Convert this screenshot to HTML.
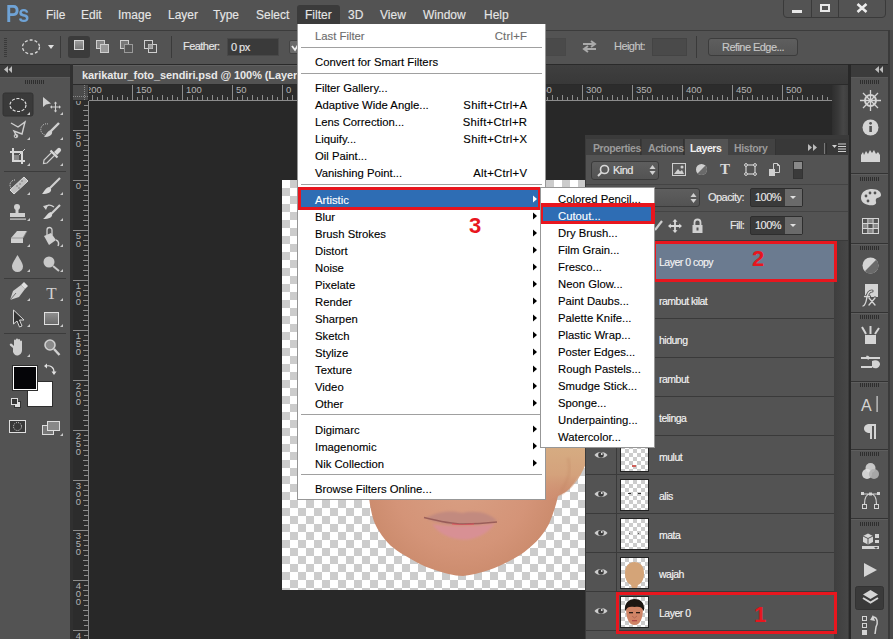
<!DOCTYPE html><html><head><meta charset="utf-8"><style>

*{margin:0;padding:0;box-sizing:border-box}
html,body{width:893px;height:639px;overflow:hidden;background:#282828;font-family:"Liberation Sans",sans-serif}
.ab{position:absolute}
.t{position:absolute;white-space:nowrap;line-height:1}

</style></head><body>
<div class="ab" style="left:0px;top:0px;width:893px;height:30px;background:#535353"></div>
<div class="t" style="left:6px;top:3px;font-size:22px;color:#6fa3d6;font-weight:bold;letter-spacing:-1px;transform:scale(0.9,1.08);transform-origin:0 0">Ps</div>
<div class="ab" style="left:297px;top:5px;width:43px;height:19px;background:#3b3b3b;border-radius:3px 3px 0 0"></div>
<div class="t" style="left:46px;top:9px;font-size:12px;color:#e6e6e6;-webkit-text-stroke-width:0.12px">File</div>
<div class="t" style="left:81px;top:9px;font-size:12px;color:#e6e6e6;-webkit-text-stroke-width:0.12px">Edit</div>
<div class="t" style="left:118px;top:9px;font-size:12px;color:#e6e6e6;-webkit-text-stroke-width:0.12px">Image</div>
<div class="t" style="left:168px;top:9px;font-size:12px;color:#e6e6e6;-webkit-text-stroke-width:0.12px">Layer</div>
<div class="t" style="left:213px;top:9px;font-size:12px;color:#e6e6e6;-webkit-text-stroke-width:0.12px">Type</div>
<div class="t" style="left:256px;top:9px;font-size:12px;color:#e6e6e6;-webkit-text-stroke-width:0.12px">Select</div>
<div class="t" style="left:305px;top:9px;font-size:12px;color:#e6e6e6;-webkit-text-stroke-width:0.12px">Filter</div>
<div class="t" style="left:348px;top:9px;font-size:12px;color:#e6e6e6;-webkit-text-stroke-width:0.12px">3D</div>
<div class="t" style="left:380px;top:9px;font-size:12px;color:#e6e6e6;-webkit-text-stroke-width:0.12px">View</div>
<div class="t" style="left:423px;top:9px;font-size:12px;color:#e6e6e6;-webkit-text-stroke-width:0.12px">Window</div>
<div class="t" style="left:484px;top:9px;font-size:12px;color:#e6e6e6;-webkit-text-stroke-width:0.12px">Help</div>
<div class="ab" style="left:783px;top:-3px;width:103px;height:21px;background:#535353;border:1px solid #3a3a3a;border-radius:4px;"></div>
<div class="ab" style="left:811px;top:0px;width:1px;height:17px;background:#3a3a3a"></div>
<div class="ab" style="left:838px;top:0px;width:1px;height:17px;background:#3a3a3a"></div>
<div class="ab" style="left:792px;top:10px;width:10px;height:3px;background:#e8e8e8"></div>
<div class="ab" style="left:820px;top:4px;width:10px;height:8px;border:2px solid #e8e8e8"></div>
<svg class="ab" style="left:856px;top:3px" width="12" height="10"><path d="M1.5 1L10.5 9M10.5 1L1.5 9" stroke="#ececec" stroke-width="2.6"/></svg>
<div class="ab" style="left:0px;top:30px;width:893px;height:1px;background:#3c3c3c"></div>
<div class="ab" style="left:0px;top:31px;width:888px;height:33px;background:#535353"></div>
<div class="ab" style="left:0px;top:64px;width:893px;height:1px;background:#2a2a2a"></div>
<div class="ab" style="left:4px;top:38px;width:3px;height:1px;background:#3a3a3a"></div>
<div class="ab" style="left:4px;top:40px;width:3px;height:1px;background:#3a3a3a"></div>
<div class="ab" style="left:4px;top:42px;width:3px;height:1px;background:#3a3a3a"></div>
<div class="ab" style="left:4px;top:44px;width:3px;height:1px;background:#3a3a3a"></div>
<div class="ab" style="left:4px;top:46px;width:3px;height:1px;background:#3a3a3a"></div>
<div class="ab" style="left:4px;top:48px;width:3px;height:1px;background:#3a3a3a"></div>
<div class="ab" style="left:4px;top:50px;width:3px;height:1px;background:#3a3a3a"></div>
<div class="ab" style="left:4px;top:52px;width:3px;height:1px;background:#3a3a3a"></div>
<div class="ab" style="left:4px;top:54px;width:3px;height:1px;background:#3a3a3a"></div>
<div class="ab" style="left:4px;top:56px;width:3px;height:1px;background:#3a3a3a"></div>
<svg class="ab" style="left:20px;top:37px" width="22" height="20"><ellipse cx="11" cy="10" rx="8.5" ry="7" fill="none" stroke="#dcdcdc" stroke-width="1.3" stroke-dasharray="3 2"/></svg>
<svg class="ab" style="left:48px;top:45px" width="7" height="5"><path d="M0 0H6L3 4Z" fill="#e0e0e0"/></svg>
<div class="ab" style="left:60px;top:36px;width:1px;height:22px;background:#3a3a3a"></div>
<div class="ab" style="left:68px;top:36px;width:22px;height:22px;background:#3b3b3b;border-radius:3px"></div>
<div class="ab" style="left:74px;top:40px;width:10px;height:10px;background:linear-gradient(#9a9a9a,#777);border:1px solid #d8d8d8"></div>
<svg class="ab" style="left:95px;top:39px" width="16" height="16"><rect x="1.5" y="1.5" width="8" height="8" fill="#888" stroke="#cfcfcf"/><rect x="5.5" y="5.5" width="8" height="8" fill="#999" stroke="#cfcfcf"/></svg>
<svg class="ab" style="left:119px;top:39px" width="16" height="16"><rect x="1.5" y="1.5" width="8" height="8" fill="#777" stroke="#cfcfcf"/><rect x="5.5" y="5.5" width="8" height="8" fill="#555" stroke="#9a9a9a"/></svg>
<svg class="ab" style="left:143px;top:39px" width="16" height="16"><rect x="1.5" y="1.5" width="8" height="8" fill="none" stroke="#cfcfcf"/><rect x="5.5" y="5.5" width="8" height="8" fill="none" stroke="#cfcfcf"/><rect x="5.5" y="5.5" width="4" height="4" fill="#999"/></svg>
<div class="ab" style="left:171px;top:36px;width:1px;height:22px;background:#3a3a3a"></div>
<div class="t" style="left:183px;top:41px;font-size:11px;color:#e6e6e6;;letter-spacing:-0.55px;-webkit-text-stroke-width:0.15px">Feather:</div>
<div class="ab" style="left:227px;top:38px;width:52px;height:18px;background:#3a3a3a;border:1px solid #484848"></div>
<div class="t" style="left:231px;top:42px;font-size:11px;color:#e6e6e6;;letter-spacing:-0.55px;-webkit-text-stroke-width:0.15px">0 px</div>
<div class="ab" style="left:289px;top:40px;width:12px;height:14px;background:#6a6a6a;border:1px solid #444;border-radius:2px"></div>
<svg class="ab" style="left:291px;top:44px" width="8" height="8"><path d="M1 2L4 6L7 1" fill="none" stroke="#eee" stroke-width="1.8"/></svg>
<div class="ab" style="left:545px;top:38px;width:21px;height:18px;background:#4a4a4a;border:1px solid #484848"></div>
<svg class="ab" style="left:581px;top:39px" width="17" height="15"><path d="M2 5H13M10 2L14 5L10 8M15 10H4M7 7L3 10L7 13" fill="none" stroke="#aaa" stroke-width="2"/></svg>
<div class="t" style="left:614px;top:41px;font-size:11px;color:#c4c4c4;;letter-spacing:-0.55px;-webkit-text-stroke-width:0.15px">Height:</div>
<div class="ab" style="left:652px;top:38px;width:35px;height:18px;background:#4a4a4a;border:1px solid #444"></div>
<div class="ab" style="left:696px;top:36px;width:1px;height:22px;background:#3a3a3a"></div>
<div class="ab" style="left:708px;top:38px;width:90px;height:18px;background:linear-gradient(#5e5e5e,#555);border:1px solid #3c3c3c;border-radius:3px"></div>
<div class="t" style="left:722px;top:42px;font-size:11px;color:#c8c8c8;;letter-spacing:-0.55px;-webkit-text-stroke-width:0.15px">Refine Edge...</div>
<div class="ab" style="left:888px;top:30px;width:5px;height:609px;background:#3a3a3a"></div>
<div class="ab" style="left:890px;top:30px;width:3px;height:609px;background:#4a4a4a"></div>
<div class="ab" style="left:0px;top:65px;width:70px;height:574px;background:#535353"></div>
<div class="ab" style="left:0px;top:65px;width:70px;height:12px;background:#3b3b3b"></div>
<div class="ab" style="left:0px;top:77px;width:70px;height:1px;background:#5a5a5a"></div>
<svg class="ab" style="left:4px;top:66px" width="9" height="8"><path d="M4 0V7L0 3.5ZM8 0V7L4.5 3.5Z" fill="#bdbdbd"/></svg>
<div class="ab" style="left:25px;top:80px;width:1px;height:4px;background:#2e2e2e"></div>
<div class="ab" style="left:27px;top:80px;width:1px;height:4px;background:#2e2e2e"></div>
<div class="ab" style="left:29px;top:80px;width:1px;height:4px;background:#2e2e2e"></div>
<div class="ab" style="left:31px;top:80px;width:1px;height:4px;background:#2e2e2e"></div>
<div class="ab" style="left:33px;top:80px;width:1px;height:4px;background:#2e2e2e"></div>
<div class="ab" style="left:35px;top:80px;width:1px;height:4px;background:#2e2e2e"></div>
<div class="ab" style="left:37px;top:80px;width:1px;height:4px;background:#2e2e2e"></div>
<div class="ab" style="left:39px;top:80px;width:1px;height:4px;background:#2e2e2e"></div>
<div class="ab" style="left:41px;top:80px;width:1px;height:4px;background:#2e2e2e"></div>
<div class="ab" style="left:43px;top:80px;width:1px;height:4px;background:#2e2e2e"></div>
<svg class="ab" style="left:0;top:0" width="70" height="450"><defs><linearGradient id="gg" x1="0" y1="0" x2="0" y2="1"><stop offset="0" stop-color="#e0e0e0"/><stop offset="1" stop-color="#a8a8a8"/></linearGradient></defs><rect x="3" y="93" width="30" height="23" rx="2" fill="#3a3a3a" stroke="#333"/><rect x="4" y="171" width="62" height="1" fill="#3c3c3c"/><rect x="4" y="278" width="62" height="1" fill="#3c3c3c"/><rect x="4" y="333" width="62" height="1" fill="#3c3c3c"/><path d="M30 112V115H27Z" fill="#c8c8c8"/><path d="M63 112V115H60Z" fill="#c8c8c8"/><path d="M30 137V140H27Z" fill="#c8c8c8"/><path d="M63 137V140H60Z" fill="#c8c8c8"/><path d="M30 163V166H27Z" fill="#c8c8c8"/><path d="M63 163V166H60Z" fill="#c8c8c8"/><path d="M30 192V195H27Z" fill="#c8c8c8"/><path d="M63 192V195H60Z" fill="#c8c8c8"/><path d="M30 218V221H27Z" fill="#c8c8c8"/><path d="M63 218V221H60Z" fill="#c8c8c8"/><path d="M30 244V247H27Z" fill="#c8c8c8"/><path d="M63 244V247H60Z" fill="#c8c8c8"/><path d="M30 269V272H27Z" fill="#c8c8c8"/><path d="M63 269V272H60Z" fill="#c8c8c8"/><path d="M30 298V301H27Z" fill="#c8c8c8"/><path d="M63 298V301H60Z" fill="#c8c8c8"/><path d="M30 324V327H27Z" fill="#c8c8c8"/><path d="M63 324V327H60Z" fill="#c8c8c8"/><path d="M30 354V357H27Z" fill="#c8c8c8"/><path d="M63 433V436H60Z" fill="#c8c8c8"/><ellipse cx="18" cy="105" rx="8" ry="6.5" fill="none" stroke="#e0e0e0" stroke-width="1.2" stroke-dasharray="3 1.6"/><path d="M43 97V107L46 104.5L51 103.5Z" fill="#d0d0d0"/><path d="M55.5 103V111M51.5 107H59.5" stroke="#d0d0d0" stroke-width="1.1"/><path d="M55.5 101.5L53.8 103.5H57.2ZM55.5 112.5L53.8 110.5H57.2ZM50 107L52 105.3V108.7ZM61 107L59 105.3V108.7Z" fill="#d0d0d0"/><path d="M11 123L18 127L25 122L22 134L14 131L17 137" fill="none" stroke="#d0d0d0" stroke-width="1.4"/><circle cx="16" cy="136" r="1.8" fill="none" stroke="#d0d0d0"/><path d="M48 124A5 5 0 1 0 45 135" fill="none" stroke="#d0d0d0" stroke-dasharray="1 1"/><path d="M59 123L51 131" stroke="#d0d0d0" stroke-width="2.4"/><path d="M51 130C47 131 46 135 44 137C49 137 53 135 52 131Z" fill="#d0d0d0"/><path d="M13 148V161H25M10 152H22V164" fill="none" stroke="#d8d8d8" stroke-width="2"/><path d="M14 160L25 149" stroke="#d0d0d0" stroke-width="1"/><rect x="14" y="155" width="5" height="5" fill="#888"/><path d="M43.5 163.5L44 160L52 152L55 155L47 163Z" fill="none" stroke="#d0d0d0" stroke-width="1.2"/><path d="M50.5 150.5L57.5 157.5" stroke="#d8d8d8" stroke-width="2.2"/><path d="M54 152L57.5 148.5A2 2 0 0 1 60.5 151.5L57 155Z" fill="#d8d8d8"/><path d="M10 190L24 177L28 181L14 194Z" fill="#c0c0c0" stroke="#dcdcdc"/><path d="M15 180A5 5 0 0 0 12 189" fill="none" stroke="#e0e0e0" stroke-dasharray="1 1"/><circle cx="17" cy="186" r="0.8" fill="#777"/><circle cx="20" cy="184" r="0.8" fill="#777"/><circle cx="22" cy="181" r="0.8" fill="#777"/><circle cx="19" cy="188" r="0.8" fill="#777"/><path d="M60 178L49 189" stroke="#d0d0d0" stroke-width="2.2"/><path d="M49 187C45 188 44 192 42 194C48 194 52 192 51 189Z" fill="#d8d8d8"/><circle cx="17" cy="207" r="3" fill="#d0d0d0"/><rect x="15.5" y="209" width="3" height="4" fill="#d0d0d0"/><rect x="10" y="213" width="15" height="4" fill="#d0d0d0"/><rect x="10" y="218.5" width="16" height="1.2" fill="#d0d0d0"/><path d="M60 205L51 214" stroke="#d0d0d0" stroke-width="2.2"/><path d="M51 212C47 213 46 217 43 219C49 219 53 217 52 214Z" fill="#d8d8d8"/><path d="M54 207C50 204 46 205 45 208" fill="none" stroke="#d0d0d0" stroke-width="1.3"/><path d="M43 206L46 210L48 205Z" fill="#d0d0d0"/><path d="M11 238L17 231H27L23 238V243H11Z" fill="#d0d0d0"/><path d="M11 238H23L27 231" fill="none" stroke="#8a8a8a" stroke-width="0.8"/><path d="M44 236L51 233L56 240L49 245Z" fill="#d0d0d0"/><path d="M47 235V230A2.5 2.5 0 0 1 52 230V235" fill="none" stroke="#d0d0d0" stroke-width="1.3"/><path d="M56 240C59 241 59 244 58 246" stroke="#d0d0d0" stroke-width="1.5" fill="none"/><path d="M17.5 255C14 261 12 264 12 266.5A5.5 5.5 0 0 0 23 266.5C23 264 21 261 17.5 255Z" fill="#c8c8c8"/><circle cx="49" cy="262" r="5.5" fill="#c8c8c8"/><path d="M53 266L59 271" stroke="#c8c8c8" stroke-width="2"/><path d="M10 300L13 291L21 285L25 289L19 297Z" fill="#d0d0d0"/><path d="M21 285L24 282L28 286L25 289Z" fill="#e0e0e0"/><path d="M10 300L16 293" stroke="#555" stroke-width="0.8"/><text x="51.5" y="298.5" font-family="Liberation Serif" font-size="17" fill="#d0d0d0" text-anchor="middle">T</text><path d="M13.5 310V324L17 321L19.5 327L22 326L19.5 320H24Z" fill="#333" stroke="#d8d8d8" stroke-width="1"/><rect x="44.5" y="312.5" width="14" height="12" fill="url(#rg)" stroke="#e0e0e0"/><defs><linearGradient id="rg" x1="0" y1="0" x2="0" y2="1"><stop offset="0" stop-color="#909090"/><stop offset="1" stop-color="#6a6a6a"/></linearGradient></defs><path d="M13 348L10 345.5A1 1 0 0 1 12 344L14 346V340.5A1 1 0 0 1 16 340.5V344V339.5A1 1 0 0 1 18 339.5V344V340A1 1 0 0 1 20 340V345V341.5A1 1 0 0 1 22 341.5V350C22 353 20 355.5 17 355.5C15 355.5 14 354 13 352Z" fill="#d0d0d0"/><circle cx="50" cy="345" r="5" fill="#8a8a8a" stroke="#d0d0d0" stroke-width="1.6"/><path d="M54 349L59.5 355" stroke="#d0d0d0" stroke-width="2.4"/><path d="M46 366C50 365 54 367 54 372" fill="none" stroke="#e0e0e0" stroke-width="1.2"/><path d="M44 366L47 363.5V368.5ZM54 375L51.5 371.5H56.5Z" fill="#e0e0e0"/><rect x="27" y="381" width="26" height="26" fill="#2e2e2e"/><rect x="28" y="382" width="24" height="24" fill="#fff"/><rect x="12" y="365" width="26" height="26" fill="#2e2e2e"/><rect x="13" y="366" width="24" height="24" fill="#fff"/><rect x="14" y="367" width="22" height="22" fill="#050508"/><rect x="14.5" y="401.5" width="6" height="6" fill="#ddd" stroke="#333"/><rect x="11.5" y="398.5" width="6" height="6" fill="#333" stroke="#ddd"/><rect x="9.5" y="420.5" width="16" height="12" fill="#3a3a3a" stroke="#e0e0e0"/><circle cx="17.5" cy="426.5" r="4" fill="none" stroke="#e0e0e0" stroke-dasharray="1 1.1"/><rect x="42.5" y="425.5" width="11" height="9" fill="#777" stroke="#ddd"/><rect x="47.5" y="421.5" width="12" height="9" fill="#888" stroke="#ddd"/></svg>
<div class="ab" style="left:70px;top:64px;width:3px;height:575px;background:#303030"></div>
<div class="ab" style="left:73px;top:65px;width:775px;height:20px;background:linear-gradient(#3f3f3f,#383838)"></div>
<div class="ab" style="left:73px;top:65px;width:470px;height:19px;background:#535353;border-top:1px solid #606060"></div>
<div class="t" style="left:82px;top:70px;font-size:11px;color:#e8e8e8;font-weight:bold;letter-spacing:-0.1px">karikatur_foto_sendiri.psd @ 100% (Layer 0 copy, RGB/8) *</div>
<div class="ab" style="left:73px;top:84px;width:775px;height:1px;background:#2a2a2a"></div>
<div class="ab" style="left:73px;top:85px;width:759px;height:16px;background:#2c2c2c"></div>
<div class="ab" style="left:73px;top:85px;width:16px;height:554px;background:#2c2c2c"></div>
<div class="ab" style="left:73px;top:85px;width:15px;height:15px;background:#4b4b4b"></div>
<svg class="ab" style="left:73px;top:85px" width="16" height="16"><path d="M11.5 0V16M0 11.5H16" stroke="#8a8a8a" stroke-dasharray="1 1"/></svg>
<svg class="ab" style="left:89px;top:85px" width="743" height="16"><rect x="0" y="15" width="743" height="1" fill="#8c8c8c"/><rect x="3" y="10" width="1" height="5" fill="#8c8c8c"/><rect x="8" y="12" width="1" height="3" fill="#8c8c8c"/><rect x="13" y="10" width="1" height="5" fill="#8c8c8c"/><rect x="18" y="12" width="1" height="3" fill="#8c8c8c"/><rect x="23" y="10" width="1" height="5" fill="#8c8c8c"/><rect x="28" y="12" width="1" height="3" fill="#8c8c8c"/><rect x="33" y="10" width="1" height="5" fill="#8c8c8c"/><rect x="38" y="12" width="1" height="3" fill="#8c8c8c"/><rect x="43" y="0" width="1" height="15" fill="#8c8c8c"/><rect x="48" y="12" width="1" height="3" fill="#8c8c8c"/><rect x="53" y="10" width="1" height="5" fill="#8c8c8c"/><rect x="58" y="12" width="1" height="3" fill="#8c8c8c"/><rect x="63" y="10" width="1" height="5" fill="#8c8c8c"/><rect x="68" y="12" width="1" height="3" fill="#8c8c8c"/><rect x="73" y="10" width="1" height="5" fill="#8c8c8c"/><rect x="78" y="12" width="1" height="3" fill="#8c8c8c"/><rect x="83" y="10" width="1" height="5" fill="#8c8c8c"/><rect x="88" y="12" width="1" height="3" fill="#8c8c8c"/><rect x="93" y="0" width="1" height="15" fill="#8c8c8c"/><rect x="98" y="12" width="1" height="3" fill="#8c8c8c"/><rect x="103" y="10" width="1" height="5" fill="#8c8c8c"/><rect x="108" y="12" width="1" height="3" fill="#8c8c8c"/><rect x="113" y="10" width="1" height="5" fill="#8c8c8c"/><rect x="118" y="12" width="1" height="3" fill="#8c8c8c"/><rect x="123" y="10" width="1" height="5" fill="#8c8c8c"/><rect x="128" y="12" width="1" height="3" fill="#8c8c8c"/><rect x="133" y="10" width="1" height="5" fill="#8c8c8c"/><rect x="138" y="12" width="1" height="3" fill="#8c8c8c"/><rect x="143" y="0" width="1" height="15" fill="#8c8c8c"/><rect x="148" y="12" width="1" height="3" fill="#8c8c8c"/><rect x="153" y="10" width="1" height="5" fill="#8c8c8c"/><rect x="158" y="12" width="1" height="3" fill="#8c8c8c"/><rect x="163" y="10" width="1" height="5" fill="#8c8c8c"/><rect x="168" y="12" width="1" height="3" fill="#8c8c8c"/><rect x="173" y="10" width="1" height="5" fill="#8c8c8c"/><rect x="178" y="12" width="1" height="3" fill="#8c8c8c"/><rect x="183" y="10" width="1" height="5" fill="#8c8c8c"/><rect x="188" y="12" width="1" height="3" fill="#8c8c8c"/><rect x="193" y="0" width="1" height="15" fill="#8c8c8c"/><rect x="198" y="12" width="1" height="3" fill="#8c8c8c"/><rect x="203" y="10" width="1" height="5" fill="#8c8c8c"/><rect x="208" y="12" width="1" height="3" fill="#8c8c8c"/><rect x="213" y="10" width="1" height="5" fill="#8c8c8c"/><rect x="218" y="12" width="1" height="3" fill="#8c8c8c"/><rect x="223" y="10" width="1" height="5" fill="#8c8c8c"/><rect x="228" y="12" width="1" height="3" fill="#8c8c8c"/><rect x="233" y="10" width="1" height="5" fill="#8c8c8c"/><rect x="238" y="12" width="1" height="3" fill="#8c8c8c"/><rect x="243" y="0" width="1" height="15" fill="#8c8c8c"/><rect x="248" y="12" width="1" height="3" fill="#8c8c8c"/><rect x="253" y="10" width="1" height="5" fill="#8c8c8c"/><rect x="258" y="12" width="1" height="3" fill="#8c8c8c"/><rect x="263" y="10" width="1" height="5" fill="#8c8c8c"/><rect x="268" y="12" width="1" height="3" fill="#8c8c8c"/><rect x="273" y="10" width="1" height="5" fill="#8c8c8c"/><rect x="278" y="12" width="1" height="3" fill="#8c8c8c"/><rect x="283" y="10" width="1" height="5" fill="#8c8c8c"/><rect x="288" y="12" width="1" height="3" fill="#8c8c8c"/><rect x="293" y="0" width="1" height="15" fill="#8c8c8c"/><rect x="298" y="12" width="1" height="3" fill="#8c8c8c"/><rect x="303" y="10" width="1" height="5" fill="#8c8c8c"/><rect x="308" y="12" width="1" height="3" fill="#8c8c8c"/><rect x="313" y="10" width="1" height="5" fill="#8c8c8c"/><rect x="318" y="12" width="1" height="3" fill="#8c8c8c"/><rect x="323" y="10" width="1" height="5" fill="#8c8c8c"/><rect x="328" y="12" width="1" height="3" fill="#8c8c8c"/><rect x="333" y="10" width="1" height="5" fill="#8c8c8c"/><rect x="338" y="12" width="1" height="3" fill="#8c8c8c"/><rect x="343" y="0" width="1" height="15" fill="#8c8c8c"/><rect x="348" y="12" width="1" height="3" fill="#8c8c8c"/><rect x="353" y="10" width="1" height="5" fill="#8c8c8c"/><rect x="358" y="12" width="1" height="3" fill="#8c8c8c"/><rect x="363" y="10" width="1" height="5" fill="#8c8c8c"/><rect x="368" y="12" width="1" height="3" fill="#8c8c8c"/><rect x="373" y="10" width="1" height="5" fill="#8c8c8c"/><rect x="378" y="12" width="1" height="3" fill="#8c8c8c"/><rect x="383" y="10" width="1" height="5" fill="#8c8c8c"/><rect x="388" y="12" width="1" height="3" fill="#8c8c8c"/><rect x="393" y="0" width="1" height="15" fill="#8c8c8c"/><rect x="398" y="12" width="1" height="3" fill="#8c8c8c"/><rect x="403" y="10" width="1" height="5" fill="#8c8c8c"/><rect x="408" y="12" width="1" height="3" fill="#8c8c8c"/><rect x="413" y="10" width="1" height="5" fill="#8c8c8c"/><rect x="418" y="12" width="1" height="3" fill="#8c8c8c"/><rect x="423" y="10" width="1" height="5" fill="#8c8c8c"/><rect x="428" y="12" width="1" height="3" fill="#8c8c8c"/><rect x="433" y="10" width="1" height="5" fill="#8c8c8c"/><rect x="438" y="12" width="1" height="3" fill="#8c8c8c"/><rect x="443" y="0" width="1" height="15" fill="#8c8c8c"/><rect x="448" y="12" width="1" height="3" fill="#8c8c8c"/><rect x="453" y="10" width="1" height="5" fill="#8c8c8c"/><rect x="458" y="12" width="1" height="3" fill="#8c8c8c"/><rect x="463" y="10" width="1" height="5" fill="#8c8c8c"/><rect x="468" y="12" width="1" height="3" fill="#8c8c8c"/><rect x="473" y="10" width="1" height="5" fill="#8c8c8c"/><rect x="478" y="12" width="1" height="3" fill="#8c8c8c"/><rect x="483" y="10" width="1" height="5" fill="#8c8c8c"/><rect x="488" y="12" width="1" height="3" fill="#8c8c8c"/><rect x="493" y="0" width="1" height="15" fill="#8c8c8c"/><rect x="498" y="12" width="1" height="3" fill="#8c8c8c"/><rect x="503" y="10" width="1" height="5" fill="#8c8c8c"/><rect x="508" y="12" width="1" height="3" fill="#8c8c8c"/><rect x="513" y="10" width="1" height="5" fill="#8c8c8c"/><rect x="518" y="12" width="1" height="3" fill="#8c8c8c"/><rect x="523" y="10" width="1" height="5" fill="#8c8c8c"/><rect x="528" y="12" width="1" height="3" fill="#8c8c8c"/><rect x="533" y="10" width="1" height="5" fill="#8c8c8c"/><rect x="538" y="12" width="1" height="3" fill="#8c8c8c"/><rect x="543" y="0" width="1" height="15" fill="#8c8c8c"/><rect x="548" y="12" width="1" height="3" fill="#8c8c8c"/><rect x="553" y="10" width="1" height="5" fill="#8c8c8c"/><rect x="558" y="12" width="1" height="3" fill="#8c8c8c"/><rect x="563" y="10" width="1" height="5" fill="#8c8c8c"/><rect x="568" y="12" width="1" height="3" fill="#8c8c8c"/><rect x="573" y="10" width="1" height="5" fill="#8c8c8c"/><rect x="578" y="12" width="1" height="3" fill="#8c8c8c"/><rect x="583" y="10" width="1" height="5" fill="#8c8c8c"/><rect x="588" y="12" width="1" height="3" fill="#8c8c8c"/><rect x="593" y="0" width="1" height="15" fill="#8c8c8c"/><rect x="598" y="12" width="1" height="3" fill="#8c8c8c"/><rect x="603" y="10" width="1" height="5" fill="#8c8c8c"/><rect x="608" y="12" width="1" height="3" fill="#8c8c8c"/><rect x="613" y="10" width="1" height="5" fill="#8c8c8c"/><rect x="618" y="12" width="1" height="3" fill="#8c8c8c"/><rect x="623" y="10" width="1" height="5" fill="#8c8c8c"/><rect x="628" y="12" width="1" height="3" fill="#8c8c8c"/><rect x="633" y="10" width="1" height="5" fill="#8c8c8c"/><rect x="638" y="12" width="1" height="3" fill="#8c8c8c"/><rect x="643" y="0" width="1" height="15" fill="#8c8c8c"/><rect x="648" y="12" width="1" height="3" fill="#8c8c8c"/><rect x="653" y="10" width="1" height="5" fill="#8c8c8c"/><rect x="658" y="12" width="1" height="3" fill="#8c8c8c"/><rect x="663" y="10" width="1" height="5" fill="#8c8c8c"/><rect x="668" y="12" width="1" height="3" fill="#8c8c8c"/><rect x="673" y="10" width="1" height="5" fill="#8c8c8c"/><rect x="678" y="12" width="1" height="3" fill="#8c8c8c"/><rect x="683" y="10" width="1" height="5" fill="#8c8c8c"/><rect x="688" y="12" width="1" height="3" fill="#8c8c8c"/><rect x="693" y="0" width="1" height="15" fill="#8c8c8c"/><rect x="698" y="12" width="1" height="3" fill="#8c8c8c"/><rect x="703" y="10" width="1" height="5" fill="#8c8c8c"/><rect x="708" y="12" width="1" height="3" fill="#8c8c8c"/><rect x="713" y="10" width="1" height="5" fill="#8c8c8c"/><rect x="718" y="12" width="1" height="3" fill="#8c8c8c"/><rect x="723" y="10" width="1" height="5" fill="#8c8c8c"/><rect x="728" y="12" width="1" height="3" fill="#8c8c8c"/><rect x="733" y="10" width="1" height="5" fill="#8c8c8c"/><rect x="738" y="12" width="1" height="3" fill="#8c8c8c"/></svg>
<div class="ab" style="left:89px;top:85px;width:743px;height:15px;overflow:hidden">
<div class="t" style="left:-3px;top:0px;font-size:9.5px;color:#b4b4b4;">200</div>
<div class="t" style="left:47px;top:0px;font-size:9.5px;color:#b4b4b4;">150</div>
<div class="t" style="left:97px;top:0px;font-size:9.5px;color:#b4b4b4;">100</div>
<div class="t" style="left:147px;top:0px;font-size:9.5px;color:#b4b4b4;">50</div>
<div class="t" style="left:197px;top:0px;font-size:9.5px;color:#b4b4b4;">0</div>
<div class="t" style="left:247px;top:0px;font-size:9.5px;color:#b4b4b4;">50</div>
<div class="t" style="left:297px;top:0px;font-size:9.5px;color:#b4b4b4;">100</div>
<div class="t" style="left:347px;top:0px;font-size:9.5px;color:#b4b4b4;">150</div>
<div class="t" style="left:397px;top:0px;font-size:9.5px;color:#b4b4b4;">200</div>
<div class="t" style="left:447px;top:0px;font-size:9.5px;color:#b4b4b4;">250</div>
<div class="t" style="left:497px;top:0px;font-size:9.5px;color:#b4b4b4;">300</div>
<div class="t" style="left:547px;top:0px;font-size:9.5px;color:#b4b4b4;">350</div>
<div class="t" style="left:597px;top:0px;font-size:9.5px;color:#b4b4b4;">400</div>
<div class="t" style="left:647px;top:0px;font-size:9.5px;color:#b4b4b4;">450</div>
<div class="t" style="left:697px;top:0px;font-size:9.5px;color:#b4b4b4;">500</div>
</div>
<svg class="ab" style="left:73px;top:101px" width="16" height="538"><rect x="15" y="0" width="1" height="538" fill="#8c8c8c"/><rect x="11" y="4" width="4" height="1" fill="#8c8c8c"/><rect x="10" y="9" width="5" height="1" fill="#8c8c8c"/><rect x="11" y="14" width="4" height="1" fill="#8c8c8c"/><rect x="10" y="19" width="5" height="1" fill="#8c8c8c"/><rect x="11" y="24" width="4" height="1" fill="#8c8c8c"/><rect x="0" y="29" width="15" height="1" fill="#8c8c8c"/><rect x="11" y="34" width="4" height="1" fill="#8c8c8c"/><rect x="10" y="39" width="5" height="1" fill="#8c8c8c"/><rect x="11" y="44" width="4" height="1" fill="#8c8c8c"/><rect x="10" y="49" width="5" height="1" fill="#8c8c8c"/><rect x="11" y="54" width="4" height="1" fill="#8c8c8c"/><rect x="10" y="59" width="5" height="1" fill="#8c8c8c"/><rect x="11" y="64" width="4" height="1" fill="#8c8c8c"/><rect x="10" y="69" width="5" height="1" fill="#8c8c8c"/><rect x="11" y="74" width="4" height="1" fill="#8c8c8c"/><rect x="0" y="79" width="15" height="1" fill="#8c8c8c"/><rect x="11" y="84" width="4" height="1" fill="#8c8c8c"/><rect x="10" y="89" width="5" height="1" fill="#8c8c8c"/><rect x="11" y="94" width="4" height="1" fill="#8c8c8c"/><rect x="10" y="99" width="5" height="1" fill="#8c8c8c"/><rect x="11" y="104" width="4" height="1" fill="#8c8c8c"/><rect x="10" y="109" width="5" height="1" fill="#8c8c8c"/><rect x="11" y="114" width="4" height="1" fill="#8c8c8c"/><rect x="10" y="119" width="5" height="1" fill="#8c8c8c"/><rect x="11" y="124" width="4" height="1" fill="#8c8c8c"/><rect x="0" y="129" width="15" height="1" fill="#8c8c8c"/><rect x="11" y="134" width="4" height="1" fill="#8c8c8c"/><rect x="10" y="139" width="5" height="1" fill="#8c8c8c"/><rect x="11" y="144" width="4" height="1" fill="#8c8c8c"/><rect x="10" y="149" width="5" height="1" fill="#8c8c8c"/><rect x="11" y="154" width="4" height="1" fill="#8c8c8c"/><rect x="10" y="159" width="5" height="1" fill="#8c8c8c"/><rect x="11" y="164" width="4" height="1" fill="#8c8c8c"/><rect x="10" y="169" width="5" height="1" fill="#8c8c8c"/><rect x="11" y="174" width="4" height="1" fill="#8c8c8c"/><rect x="0" y="179" width="15" height="1" fill="#8c8c8c"/><rect x="11" y="184" width="4" height="1" fill="#8c8c8c"/><rect x="10" y="189" width="5" height="1" fill="#8c8c8c"/><rect x="11" y="194" width="4" height="1" fill="#8c8c8c"/><rect x="10" y="199" width="5" height="1" fill="#8c8c8c"/><rect x="11" y="204" width="4" height="1" fill="#8c8c8c"/><rect x="10" y="209" width="5" height="1" fill="#8c8c8c"/><rect x="11" y="214" width="4" height="1" fill="#8c8c8c"/><rect x="10" y="219" width="5" height="1" fill="#8c8c8c"/><rect x="11" y="224" width="4" height="1" fill="#8c8c8c"/><rect x="0" y="229" width="15" height="1" fill="#8c8c8c"/><rect x="11" y="234" width="4" height="1" fill="#8c8c8c"/><rect x="10" y="239" width="5" height="1" fill="#8c8c8c"/><rect x="11" y="244" width="4" height="1" fill="#8c8c8c"/><rect x="10" y="249" width="5" height="1" fill="#8c8c8c"/><rect x="11" y="254" width="4" height="1" fill="#8c8c8c"/><rect x="10" y="259" width="5" height="1" fill="#8c8c8c"/><rect x="11" y="264" width="4" height="1" fill="#8c8c8c"/><rect x="10" y="269" width="5" height="1" fill="#8c8c8c"/><rect x="11" y="274" width="4" height="1" fill="#8c8c8c"/><rect x="0" y="279" width="15" height="1" fill="#8c8c8c"/><rect x="11" y="284" width="4" height="1" fill="#8c8c8c"/><rect x="10" y="289" width="5" height="1" fill="#8c8c8c"/><rect x="11" y="294" width="4" height="1" fill="#8c8c8c"/><rect x="10" y="299" width="5" height="1" fill="#8c8c8c"/><rect x="11" y="304" width="4" height="1" fill="#8c8c8c"/><rect x="10" y="309" width="5" height="1" fill="#8c8c8c"/><rect x="11" y="314" width="4" height="1" fill="#8c8c8c"/><rect x="10" y="319" width="5" height="1" fill="#8c8c8c"/><rect x="11" y="324" width="4" height="1" fill="#8c8c8c"/><rect x="0" y="329" width="15" height="1" fill="#8c8c8c"/><rect x="11" y="334" width="4" height="1" fill="#8c8c8c"/><rect x="10" y="339" width="5" height="1" fill="#8c8c8c"/><rect x="11" y="344" width="4" height="1" fill="#8c8c8c"/><rect x="10" y="349" width="5" height="1" fill="#8c8c8c"/><rect x="11" y="354" width="4" height="1" fill="#8c8c8c"/><rect x="10" y="359" width="5" height="1" fill="#8c8c8c"/><rect x="11" y="364" width="4" height="1" fill="#8c8c8c"/><rect x="10" y="369" width="5" height="1" fill="#8c8c8c"/><rect x="11" y="374" width="4" height="1" fill="#8c8c8c"/><rect x="0" y="379" width="15" height="1" fill="#8c8c8c"/><rect x="11" y="384" width="4" height="1" fill="#8c8c8c"/><rect x="10" y="389" width="5" height="1" fill="#8c8c8c"/><rect x="11" y="394" width="4" height="1" fill="#8c8c8c"/><rect x="10" y="399" width="5" height="1" fill="#8c8c8c"/><rect x="11" y="404" width="4" height="1" fill="#8c8c8c"/><rect x="10" y="409" width="5" height="1" fill="#8c8c8c"/><rect x="11" y="414" width="4" height="1" fill="#8c8c8c"/><rect x="10" y="419" width="5" height="1" fill="#8c8c8c"/><rect x="11" y="424" width="4" height="1" fill="#8c8c8c"/><rect x="0" y="429" width="15" height="1" fill="#8c8c8c"/><rect x="11" y="434" width="4" height="1" fill="#8c8c8c"/><rect x="10" y="439" width="5" height="1" fill="#8c8c8c"/><rect x="11" y="444" width="4" height="1" fill="#8c8c8c"/><rect x="10" y="449" width="5" height="1" fill="#8c8c8c"/><rect x="11" y="454" width="4" height="1" fill="#8c8c8c"/><rect x="10" y="459" width="5" height="1" fill="#8c8c8c"/><rect x="11" y="464" width="4" height="1" fill="#8c8c8c"/><rect x="10" y="469" width="5" height="1" fill="#8c8c8c"/><rect x="11" y="474" width="4" height="1" fill="#8c8c8c"/><rect x="0" y="479" width="15" height="1" fill="#8c8c8c"/><rect x="11" y="484" width="4" height="1" fill="#8c8c8c"/><rect x="10" y="489" width="5" height="1" fill="#8c8c8c"/><rect x="11" y="494" width="4" height="1" fill="#8c8c8c"/><rect x="10" y="499" width="5" height="1" fill="#8c8c8c"/><rect x="11" y="504" width="4" height="1" fill="#8c8c8c"/><rect x="10" y="509" width="5" height="1" fill="#8c8c8c"/><rect x="11" y="514" width="4" height="1" fill="#8c8c8c"/><rect x="10" y="519" width="5" height="1" fill="#8c8c8c"/><rect x="11" y="524" width="4" height="1" fill="#8c8c8c"/><rect x="0" y="529" width="15" height="1" fill="#8c8c8c"/><rect x="11" y="534" width="4" height="1" fill="#8c8c8c"/></svg>
<div class="ab" style="left:73px;top:101px;width:15px;height:538px;overflow:hidden">
<div class="t" style="left:1px;top:-20px;font-size:9.5px;color:#b4b4b4;width:9px;text-align:center">1</div>
<div class="t" style="left:1px;top:-12px;font-size:9.5px;color:#b4b4b4;width:9px;text-align:center">0</div>
<div class="t" style="left:1px;top:-4px;font-size:9.5px;color:#b4b4b4;width:9px;text-align:center">0</div>
<div class="t" style="left:1px;top:30px;font-size:9.5px;color:#b4b4b4;width:9px;text-align:center">5</div>
<div class="t" style="left:1px;top:38px;font-size:9.5px;color:#b4b4b4;width:9px;text-align:center">0</div>
<div class="t" style="left:1px;top:80px;font-size:9.5px;color:#b4b4b4;width:9px;text-align:center">0</div>
<div class="t" style="left:1px;top:130px;font-size:9.5px;color:#b4b4b4;width:9px;text-align:center">5</div>
<div class="t" style="left:1px;top:138px;font-size:9.5px;color:#b4b4b4;width:9px;text-align:center">0</div>
<div class="t" style="left:1px;top:180px;font-size:9.5px;color:#b4b4b4;width:9px;text-align:center">1</div>
<div class="t" style="left:1px;top:188px;font-size:9.5px;color:#b4b4b4;width:9px;text-align:center">0</div>
<div class="t" style="left:1px;top:196px;font-size:9.5px;color:#b4b4b4;width:9px;text-align:center">0</div>
<div class="t" style="left:1px;top:230px;font-size:9.5px;color:#b4b4b4;width:9px;text-align:center">1</div>
<div class="t" style="left:1px;top:238px;font-size:9.5px;color:#b4b4b4;width:9px;text-align:center">5</div>
<div class="t" style="left:1px;top:246px;font-size:9.5px;color:#b4b4b4;width:9px;text-align:center">0</div>
<div class="t" style="left:1px;top:280px;font-size:9.5px;color:#b4b4b4;width:9px;text-align:center">2</div>
<div class="t" style="left:1px;top:288px;font-size:9.5px;color:#b4b4b4;width:9px;text-align:center">0</div>
<div class="t" style="left:1px;top:296px;font-size:9.5px;color:#b4b4b4;width:9px;text-align:center">0</div>
<div class="t" style="left:1px;top:330px;font-size:9.5px;color:#b4b4b4;width:9px;text-align:center">2</div>
<div class="t" style="left:1px;top:338px;font-size:9.5px;color:#b4b4b4;width:9px;text-align:center">5</div>
<div class="t" style="left:1px;top:346px;font-size:9.5px;color:#b4b4b4;width:9px;text-align:center">0</div>
<div class="t" style="left:1px;top:380px;font-size:9.5px;color:#b4b4b4;width:9px;text-align:center">3</div>
<div class="t" style="left:1px;top:388px;font-size:9.5px;color:#b4b4b4;width:9px;text-align:center">0</div>
<div class="t" style="left:1px;top:396px;font-size:9.5px;color:#b4b4b4;width:9px;text-align:center">0</div>
<div class="t" style="left:1px;top:430px;font-size:9.5px;color:#b4b4b4;width:9px;text-align:center">3</div>
<div class="t" style="left:1px;top:438px;font-size:9.5px;color:#b4b4b4;width:9px;text-align:center">5</div>
<div class="t" style="left:1px;top:446px;font-size:9.5px;color:#b4b4b4;width:9px;text-align:center">0</div>
<div class="t" style="left:1px;top:480px;font-size:9.5px;color:#b4b4b4;width:9px;text-align:center">4</div>
<div class="t" style="left:1px;top:488px;font-size:9.5px;color:#b4b4b4;width:9px;text-align:center">0</div>
<div class="t" style="left:1px;top:496px;font-size:9.5px;color:#b4b4b4;width:9px;text-align:center">0</div>
<div class="t" style="left:1px;top:530px;font-size:9.5px;color:#b4b4b4;width:9px;text-align:center">4</div>
<div class="t" style="left:1px;top:538px;font-size:9.5px;color:#b4b4b4;width:9px;text-align:center">5</div>
<div class="t" style="left:1px;top:546px;font-size:9.5px;color:#b4b4b4;width:9px;text-align:center">0</div>
</div>
<div class="ab" style="left:832px;top:85px;width:16px;height:554px;background:linear-gradient(90deg,#2e2e2e 0,#383838 35%,#464646 70%,#3e3e3e 100%)"></div>
<div class="ab" style="left:848px;top:64px;width:3px;height:575px;background:#282828"></div>
<div class="ab" style="left:282px;top:180px;width:303px;height:410px;background:conic-gradient(#ccc 25%,#fff 0 50%,#ccc 0 75%,#fff 0) 0 0/16px 16px"></div>
<svg class="ab" style="left:282px;top:180px" width="303" height="410" viewBox="282 180 303 410"><defs><radialGradient id="sk" cx="462" cy="480" r="125" gradientUnits="userSpaceOnUse"><stop offset="0" stop-color="#d9a084"/><stop offset="0.55" stop-color="#d49478"/><stop offset="1" stop-color="#c48464"/></radialGradient><linearGradient id="ear" x1="0" y1="447" x2="0" y2="502" gradientUnits="userSpaceOnUse"><stop offset="0" stop-color="#d6ac82"/><stop offset="0.5" stop-color="#d4a27c"/><stop offset="1" stop-color="#d29476" stop-opacity="0"/></linearGradient><filter id="bl" x="-20%" y="-50%" width="140%" height="200%"><feGaussianBlur stdDeviation="1.3"/></filter><filter id="bl2"><feGaussianBlur stdDeviation="0.6"/></filter></defs><path d="M360 300L369 498C371 512 373 522 379 531C386 543 395 550 404 555C414 561 423 566 432 569C444 573 454 576 463 576C472 575 480 573 489 570C500 566 510 561 520 555C532 547 542 537 549 524C553 515 556 505 558 496C563 494 567 491 570 488C576 481 580 472 583 463C585 456 587 450 590 440L590 300Z" fill="url(#sk)"/><path d="M540 440L590 440L590 455C586 463 582 474 576 482C571 489 565 494 559 497L545 500Z" fill="url(#ear)"/><path d="M568 458C571 468 569 480 561 491" fill="none" stroke="#b87a58" stroke-width="3" opacity="0.2" filter="url(#bl)"/><g filter="url(#bl)"><path d="M426 518C438 511 452 510 462 513C476 510 490 513 497 521C485 524 470 525 460 525C446 525 434 522 426 518Z" fill="#c08880" opacity="0.9"/><path d="M432 524C446 544 480 546 495 523C480 527 450 527 432 524Z" fill="#d89094"/></g><path d="M424 517.5C438 521 450 524 463 524C476 524 488 523 497 522" fill="none" stroke="#8a4e4e" stroke-width="1.4" opacity="0.75" filter="url(#bl2)"/><path d="M452 524C458 525 466 525 474 524" fill="none" stroke="#e84a5a" stroke-width="1.3" opacity="0.55" filter="url(#bl2)"/></svg>
<div class="ab" style="left:585px;top:135px;width:264px;height:504px;background:#3a3a3a"></div>
<div class="ab" style="left:586px;top:139px;width:262px;height:16px;background:#383838"></div>
<div class="ab" style="left:586px;top:139px;width:55px;height:16px;background:#424242;border-right:1px solid #333"></div>
<div class="ab" style="left:642px;top:139px;width:42px;height:16px;background:#424242;border-right:1px solid #333"></div>
<div class="ab" style="left:685px;top:139px;width:43px;height:17px;background:#535353"></div>
<div class="ab" style="left:728px;top:139px;width:48px;height:16px;background:#424242;border-right:1px solid #333"></div>
<div class="t" style="left:593px;top:143px;font-size:10.5px;color:#9a9a9a;font-weight:bold;letter-spacing:-0.4px">Properties</div>
<div class="t" style="left:648px;top:143px;font-size:10.5px;color:#9a9a9a;font-weight:bold;letter-spacing:-0.4px">Actions</div>
<div class="t" style="left:690px;top:143px;font-size:10.5px;color:#f0f0f0;font-weight:bold;letter-spacing:-0.4px">Layers</div>
<div class="t" style="left:734px;top:143px;font-size:10.5px;color:#9a9a9a;font-weight:bold;letter-spacing:-0.4px">History</div>
<svg class="ab" style="left:808px;top:144px" width="12" height="8"><path d="M0 0V7L4 3.5ZM5 0V7L9 3.5Z" fill="#bcbcbc"/></svg>
<div class="ab" style="left:824px;top:143px;width:1px;height:11px;background:#7a7a7a"></div>
<div class="ab" style="left:826px;top:143px;width:1px;height:11px;background:#2e2e2e"></div>
<svg class="ab" style="left:832px;top:143px" width="15" height="10"><path d="M0 2H5L2.5 5Z" fill="#cfcfcf"/><path d="M6 1H14M6 3.5H14M6 6H14M6 8.5H14" stroke="#cfcfcf" stroke-width="1"/></svg>
<div class="ab" style="left:586px;top:155px;width:262px;height:484px;background:#535353"></div>
<div class="ab" style="left:591px;top:161px;width:68px;height:19px;background:linear-gradient(#5e5e5e,#535353);border:1px solid #3a3a3a;border-radius:3px"></div>
<svg class="ab" style="left:597px;top:164px" width="13" height="13"><circle cx="7.5" cy="5.5" r="4" fill="none" stroke="#d8d8d8" stroke-width="1.6"/><path d="M4.6 8.4L1 12" stroke="#d8d8d8" stroke-width="2"/></svg>
<div class="t" style="left:613px;top:165px;font-size:11px;color:#e8e8e8;;letter-spacing:-0.55px;-webkit-text-stroke-width:0.15px">Kind</div>
<svg class="ab" style="left:649px;top:164px" width="7" height="12"><path d="M0.5 5L3.5 1L6.5 5ZM0.5 7L3.5 11L6.5 7Z" fill="#d0d0d0"/></svg>
<svg class="ab" style="left:672px;top:163px" width="14" height="13"><rect x="0.5" y="0.5" width="13" height="12" fill="#5a5a5a" stroke="#cfcfcf"/><path d="M2 11L6 6L8 8.5L10 7L12 11Z" fill="#cfcfcf"/><circle cx="10" cy="4" r="1.5" fill="#cfcfcf"/></svg>
<svg class="ab" style="left:695px;top:163px" width="13" height="13"><circle cx="6.5" cy="6.5" r="5.5" fill="#cfcfcf"/><path d="M2.6 10.4L10.4 2.6A5.5 5.5 0 0 1 2.6 10.4Z" fill="#6a6a6a"/></svg>
<div class="t" style="left:720px;top:162px;font-size:15px;color:#d8d8d8;font-family:Liberation Serif,serif;font-weight:bold">T</div>
<svg class="ab" style="left:744px;top:163px" width="13" height="13"><rect x="2" y="2" width="9" height="9" fill="none" stroke="#cfcfcf" stroke-width="1.2"/><circle cx="2" cy="2" r="1.4" fill="#535353" stroke="#dcdcdc"/><circle cx="11" cy="2" r="1.4" fill="#535353" stroke="#dcdcdc"/><circle cx="2" cy="11" r="1.4" fill="#535353" stroke="#dcdcdc"/><circle cx="11" cy="11" r="1.4" fill="#535353" stroke="#dcdcdc"/></svg>
<svg class="ab" style="left:768px;top:162px" width="13" height="14"><path d="M5.5 1.5H9.5L11.5 3.5V10.5H5.5Z" fill="none" stroke="#cfcfcf"/><path d="M9.5 1.5V3.5H11.5" fill="none" stroke="#cfcfcf"/><rect x="1" y="7" width="6" height="7" fill="#cfcfcf"/></svg>
<div class="ab" style="left:793px;top:161px;width:10px;height:18px;background:linear-gradient(#8a8a8a 0 45%,#3a3a3a 45%);border:1px solid #333"></div>
<div class="ab" style="left:586px;top:184px;width:262px;height:1px;background:#444"></div>
<div class="ab" style="left:640px;top:188px;width:60px;height:19px;background:linear-gradient(#5e5e5e,#535353);border:1px solid #3a3a3a;border-radius:3px"></div>
<svg class="ab" style="left:690px;top:192px" width="7" height="12"><path d="M0.5 5L3.5 1L6.5 5ZM0.5 7L3.5 11L6.5 7Z" fill="#d0d0d0"/></svg>
<div class="t" style="left:708px;top:192px;font-size:11px;color:#e8e8e8;;letter-spacing:-0.55px;-webkit-text-stroke-width:0.15px">Opacity:</div>
<div class="ab" style="left:750px;top:188px;width:53px;height:19px;background:#3a3a3a;border:1px solid #2e2e2e;border-radius:2px"></div>
<div class="ab" style="left:785px;top:189px;width:17px;height:17px;background:#6a6a6a"></div>
<svg class="ab" style="left:790px;top:196px" width="7" height="4"><path d="M0 0H6L3 3Z" fill="#e0e0e0"/></svg>
<div class="t" style="left:755px;top:192px;font-size:11px;color:#e8e8e8;;letter-spacing:-0.55px;-webkit-text-stroke-width:0.15px">100%</div>
<div class="ab" style="left:586px;top:211px;width:262px;height:1px;background:#444"></div>
<svg class="ab" style="left:668px;top:219px" width="14" height="14"><path d="M7 0L9.5 2.8H7.9V6.1H11.2V4.5L14 7L11.2 9.5V7.9H7.9V11.2H9.5L7 14L4.5 11.2H6.1V7.9H2.8V9.5L0 7L2.8 4.5V6.1H6.1V2.8H4.5Z" fill="#d8d8d8"/></svg>
<svg class="ab" style="left:650px;top:220px" width="14" height="14"><path d="M12 1L5 10" stroke="#cfcfcf" stroke-width="2.2"/></svg>
<svg class="ab" style="left:692px;top:218px" width="11" height="15"><path d="M2.5 7V4.5A3 3 0 0 1 8.5 4.5V7" fill="none" stroke="#d0d0d0" stroke-width="1.8"/><rect x="0.5" y="7" width="10" height="8" fill="#d0d0d0"/><rect x="4.5" y="9.5" width="2" height="3" fill="#535353"/></svg>
<div class="t" style="left:730px;top:220px;font-size:11px;color:#e8e8e8;;letter-spacing:-0.55px;-webkit-text-stroke-width:0.15px">Fill:</div>
<div class="ab" style="left:750px;top:216px;width:53px;height:19px;background:#3a3a3a;border:1px solid #2e2e2e;border-radius:2px"></div>
<div class="ab" style="left:785px;top:217px;width:17px;height:17px;background:#6a6a6a"></div>
<svg class="ab" style="left:790px;top:224px" width="7" height="4"><path d="M0 0H6L3 3Z" fill="#e0e0e0"/></svg>
<div class="t" style="left:755px;top:220px;font-size:11px;color:#e8e8e8;;letter-spacing:-0.55px;-webkit-text-stroke-width:0.15px">100%</div>
<div class="ab" style="left:586px;top:240px;width:262px;height:1px;background:#3a3a3a"></div>
<div class="ab" style="left:586px;top:241px;width:248px;height:38px;background:#6b7b90"></div>
<div class="ab" style="left:586px;top:279px;width:248px;height:1px;background:#3a3a3a"></div>
<div class="ab" style="left:616px;top:241px;width:1px;height:38px;background:#3a3a3a"></div>
<div class="t" style="left:659px;top:257px;font-size:10.5px;color:#f4f4f4;letter-spacing:-0.5px;-webkit-text-stroke-width:0.15px">Layer 0 copy</div>
<div class="ab" style="left:586px;top:280px;width:248px;height:38px;background:#535353"></div>
<div class="ab" style="left:586px;top:318px;width:248px;height:1px;background:#3a3a3a"></div>
<div class="ab" style="left:616px;top:280px;width:1px;height:38px;background:#3a3a3a"></div>
<div class="t" style="left:659px;top:296px;font-size:10.5px;color:#f4f4f4;letter-spacing:-0.5px;-webkit-text-stroke-width:0.15px">rambut kilat</div>
<div class="ab" style="left:586px;top:319px;width:248px;height:38px;background:#535353"></div>
<div class="ab" style="left:586px;top:357px;width:248px;height:1px;background:#3a3a3a"></div>
<div class="ab" style="left:616px;top:319px;width:1px;height:38px;background:#3a3a3a"></div>
<div class="t" style="left:659px;top:335px;font-size:10.5px;color:#f4f4f4;letter-spacing:-0.5px;-webkit-text-stroke-width:0.15px">hidung</div>
<div class="ab" style="left:586px;top:358px;width:248px;height:38px;background:#535353"></div>
<div class="ab" style="left:586px;top:396px;width:248px;height:1px;background:#3a3a3a"></div>
<div class="ab" style="left:616px;top:358px;width:1px;height:38px;background:#3a3a3a"></div>
<div class="t" style="left:659px;top:374px;font-size:10.5px;color:#f4f4f4;letter-spacing:-0.5px;-webkit-text-stroke-width:0.15px">rambut</div>
<div class="ab" style="left:586px;top:397px;width:248px;height:38px;background:#535353"></div>
<div class="ab" style="left:586px;top:435px;width:248px;height:1px;background:#3a3a3a"></div>
<div class="ab" style="left:616px;top:397px;width:1px;height:38px;background:#3a3a3a"></div>
<div class="t" style="left:659px;top:413px;font-size:10.5px;color:#f4f4f4;letter-spacing:-0.5px;-webkit-text-stroke-width:0.15px">telinga</div>
<div class="ab" style="left:586px;top:436px;width:248px;height:38px;background:#535353"></div>
<div class="ab" style="left:586px;top:474px;width:248px;height:1px;background:#3a3a3a"></div>
<div class="ab" style="left:616px;top:436px;width:1px;height:38px;background:#3a3a3a"></div>
<div class="t" style="left:659px;top:452px;font-size:10.5px;color:#f4f4f4;letter-spacing:-0.5px;-webkit-text-stroke-width:0.15px">mulut</div>
<div class="ab" style="left:586px;top:475px;width:248px;height:38px;background:#535353"></div>
<div class="ab" style="left:586px;top:513px;width:248px;height:1px;background:#3a3a3a"></div>
<div class="ab" style="left:616px;top:475px;width:1px;height:38px;background:#3a3a3a"></div>
<div class="t" style="left:659px;top:491px;font-size:10.5px;color:#f4f4f4;letter-spacing:-0.5px;-webkit-text-stroke-width:0.15px">alis</div>
<div class="ab" style="left:586px;top:514px;width:248px;height:38px;background:#535353"></div>
<div class="ab" style="left:586px;top:552px;width:248px;height:1px;background:#3a3a3a"></div>
<div class="ab" style="left:616px;top:514px;width:1px;height:38px;background:#3a3a3a"></div>
<div class="t" style="left:659px;top:530px;font-size:10.5px;color:#f4f4f4;letter-spacing:-0.5px;-webkit-text-stroke-width:0.15px">mata</div>
<div class="ab" style="left:586px;top:553px;width:248px;height:38px;background:#535353"></div>
<div class="ab" style="left:586px;top:591px;width:248px;height:1px;background:#3a3a3a"></div>
<div class="ab" style="left:616px;top:553px;width:1px;height:38px;background:#3a3a3a"></div>
<div class="t" style="left:659px;top:569px;font-size:10.5px;color:#f4f4f4;letter-spacing:-0.5px;-webkit-text-stroke-width:0.15px">wajah</div>
<div class="ab" style="left:586px;top:592px;width:248px;height:38px;background:#535353"></div>
<div class="ab" style="left:586px;top:630px;width:248px;height:1px;background:#3a3a3a"></div>
<div class="ab" style="left:616px;top:592px;width:1px;height:38px;background:#3a3a3a"></div>
<div class="t" style="left:659px;top:608px;font-size:10.5px;color:#f4f4f4;letter-spacing:-0.5px;-webkit-text-stroke-width:0.15px">Layer 0</div>
<div class="ab" style="left:586px;top:631px;width:248px;height:8px;background:#535353"></div>
<svg class="ab" style="left:594px;top:255px" width="14" height="10"><path d="M0.5 5C3 1 11 1 13.5 5C11 9 3 9 0.5 5Z" fill="#cfcfcf"/><circle cx="7" cy="5" r="2.8" fill="#3a3a3a"/><circle cx="7.8" cy="4" r="0.9" fill="#eee"/></svg>
<div class="ab" style="left:620px;top:245px;width:29px;height:32px;background:#222"></div>
<div class="ab" style="left:621px;top:246px;width:27px;height:30px;background:conic-gradient(#ccc 25%,#fff 0 50%,#ccc 0 75%,#fff 0) 0 0/8px 8px"></div>
<svg class="ab" style="left:594px;top:294px" width="14" height="10"><path d="M0.5 5C3 1 11 1 13.5 5C11 9 3 9 0.5 5Z" fill="#cfcfcf"/><circle cx="7" cy="5" r="2.8" fill="#3a3a3a"/><circle cx="7.8" cy="4" r="0.9" fill="#eee"/></svg>
<div class="ab" style="left:620px;top:284px;width:29px;height:32px;background:#222"></div>
<div class="ab" style="left:621px;top:285px;width:27px;height:30px;background:conic-gradient(#ccc 25%,#fff 0 50%,#ccc 0 75%,#fff 0) 0 0/8px 8px"></div>
<svg class="ab" style="left:594px;top:333px" width="14" height="10"><path d="M0.5 5C3 1 11 1 13.5 5C11 9 3 9 0.5 5Z" fill="#cfcfcf"/><circle cx="7" cy="5" r="2.8" fill="#3a3a3a"/><circle cx="7.8" cy="4" r="0.9" fill="#eee"/></svg>
<div class="ab" style="left:620px;top:323px;width:29px;height:32px;background:#222"></div>
<div class="ab" style="left:621px;top:324px;width:27px;height:30px;background:conic-gradient(#ccc 25%,#fff 0 50%,#ccc 0 75%,#fff 0) 0 0/8px 8px"></div>
<svg class="ab" style="left:594px;top:372px" width="14" height="10"><path d="M0.5 5C3 1 11 1 13.5 5C11 9 3 9 0.5 5Z" fill="#cfcfcf"/><circle cx="7" cy="5" r="2.8" fill="#3a3a3a"/><circle cx="7.8" cy="4" r="0.9" fill="#eee"/></svg>
<div class="ab" style="left:620px;top:362px;width:29px;height:32px;background:#222"></div>
<div class="ab" style="left:621px;top:363px;width:27px;height:30px;background:conic-gradient(#ccc 25%,#fff 0 50%,#ccc 0 75%,#fff 0) 0 0/8px 8px"></div>
<svg class="ab" style="left:594px;top:411px" width="14" height="10"><path d="M0.5 5C3 1 11 1 13.5 5C11 9 3 9 0.5 5Z" fill="#cfcfcf"/><circle cx="7" cy="5" r="2.8" fill="#3a3a3a"/><circle cx="7.8" cy="4" r="0.9" fill="#eee"/></svg>
<div class="ab" style="left:620px;top:401px;width:29px;height:32px;background:#222"></div>
<div class="ab" style="left:621px;top:402px;width:27px;height:30px;background:conic-gradient(#ccc 25%,#fff 0 50%,#ccc 0 75%,#fff 0) 0 0/8px 8px"></div>
<svg class="ab" style="left:594px;top:450px" width="14" height="10"><path d="M0.5 5C3 1 11 1 13.5 5C11 9 3 9 0.5 5Z" fill="#cfcfcf"/><circle cx="7" cy="5" r="2.8" fill="#3a3a3a"/><circle cx="7.8" cy="4" r="0.9" fill="#eee"/></svg>
<div class="ab" style="left:620px;top:440px;width:29px;height:32px;background:#222"></div>
<div class="ab" style="left:621px;top:441px;width:27px;height:30px;background:conic-gradient(#ccc 25%,#fff 0 50%,#ccc 0 75%,#fff 0) 0 0/8px 8px"></div>
<svg class="ab" style="left:594px;top:489px" width="14" height="10"><path d="M0.5 5C3 1 11 1 13.5 5C11 9 3 9 0.5 5Z" fill="#cfcfcf"/><circle cx="7" cy="5" r="2.8" fill="#3a3a3a"/><circle cx="7.8" cy="4" r="0.9" fill="#eee"/></svg>
<div class="ab" style="left:620px;top:479px;width:29px;height:32px;background:#222"></div>
<div class="ab" style="left:621px;top:480px;width:27px;height:30px;background:conic-gradient(#ccc 25%,#fff 0 50%,#ccc 0 75%,#fff 0) 0 0/8px 8px"></div>
<svg class="ab" style="left:594px;top:528px" width="14" height="10"><path d="M0.5 5C3 1 11 1 13.5 5C11 9 3 9 0.5 5Z" fill="#cfcfcf"/><circle cx="7" cy="5" r="2.8" fill="#3a3a3a"/><circle cx="7.8" cy="4" r="0.9" fill="#eee"/></svg>
<div class="ab" style="left:620px;top:518px;width:29px;height:32px;background:#222"></div>
<div class="ab" style="left:621px;top:519px;width:27px;height:30px;background:conic-gradient(#ccc 25%,#fff 0 50%,#ccc 0 75%,#fff 0) 0 0/8px 8px"></div>
<svg class="ab" style="left:594px;top:567px" width="14" height="10"><path d="M0.5 5C3 1 11 1 13.5 5C11 9 3 9 0.5 5Z" fill="#cfcfcf"/><circle cx="7" cy="5" r="2.8" fill="#3a3a3a"/><circle cx="7.8" cy="4" r="0.9" fill="#eee"/></svg>
<div class="ab" style="left:620px;top:557px;width:29px;height:32px;background:#222"></div>
<div class="ab" style="left:621px;top:558px;width:27px;height:30px;background:conic-gradient(#ccc 25%,#fff 0 50%,#ccc 0 75%,#fff 0) 0 0/8px 8px"></div>
<svg class="ab" style="left:594px;top:606px" width="14" height="10"><path d="M0.5 5C3 1 11 1 13.5 5C11 9 3 9 0.5 5Z" fill="#cfcfcf"/><circle cx="7" cy="5" r="2.8" fill="#3a3a3a"/><circle cx="7.8" cy="4" r="0.9" fill="#eee"/></svg>
<div class="ab" style="left:620px;top:596px;width:29px;height:32px;background:#222"></div>
<div class="ab" style="left:621px;top:597px;width:27px;height:30px;background:conic-gradient(#ccc 25%,#fff 0 50%,#ccc 0 75%,#fff 0) 0 0/8px 8px"></div>
<div class="ab" style="left:632px;top:465px;width:4px;height:2px;background:#d0605a"></div>
<div class="ab" style="left:628px;top:493px;width:3px;height:1px;background:#333"></div>
<div class="ab" style="left:638px;top:493px;width:3px;height:1px;background:#333"></div>
<div class="ab" style="left:629px;top:533px;width:1px;height:1px;background:#555"></div>
<div class="ab" style="left:638px;top:533px;width:1px;height:1px;background:#555"></div>
<svg class="ab" style="left:621px;top:558px" width="27" height="30"><path d="M13.5 4C20 4 23 9 23 15C23 21 21 25 17 27L16 30H11L10 27C6 25 4 21 4 15C4 9 7 4 13.5 4Z" fill="#d4a478"/></svg>
<svg class="ab" style="left:621px;top:597px" width="27" height="30"><path d="M5 10C5 22 8 28 13.5 28C19 28 22 22 22 10C20 6 7 6 5 10Z" fill="#d08466"/><path d="M4 14C3 6 8 2 13.5 2C19 2 24 5 23 14L22 13C21 10 18 9 13.5 10C9 9 6 10 5 13Z" fill="#1c1612"/><rect x="8" y="15" width="4" height="1.3" fill="#2a1a14"/><rect x="15" y="15" width="4" height="1.3" fill="#2a1a14"/><path d="M11 19L13.5 21L16 19" fill="none" stroke="#a86050" stroke-width="0.8"/><rect x="11" y="23" width="5" height="1.3" fill="#b04848"/></svg>
<div class="ab" style="left:834px;top:241px;width:14px;height:398px;background:linear-gradient(90deg,#3e3e3e,#474747)"></div>
<div class="ab" style="left:653px;top:241px;width:184px;height:41px;border:3px solid #e8161e"></div>
<div class="t" style="left:752px;top:248px;font-size:22px;color:#e8161e;font-weight:bold">2</div>
<div class="ab" style="left:616px;top:592px;width:221px;height:42px;border:3px solid #e8161e"></div>
<div class="t" style="left:754px;top:604px;font-size:22px;color:#e8161e;font-weight:bold">1</div>
<div class="ab" style="left:851px;top:65px;width:37px;height:574px;background:#535353"></div>
<div class="ab" style="left:851px;top:65px;width:37px;height:12px;background:#3b3b3b"></div>
<div class="ab" style="left:851px;top:77px;width:37px;height:1px;background:#5a5a5a"></div>
<svg class="ab" style="left:875px;top:66px" width="9" height="8"><path d="M4 0V7L0 3.5ZM8 0V7L4.5 3.5Z" fill="#bdbdbd"/></svg>
<div class="ab" style="left:851px;top:173px;width:37px;height:1px;background:#333"></div>
<div class="ab" style="left:851px;top:174px;width:37px;height:1px;background:#5e5e5e"></div>
<div class="ab" style="left:851px;top:243px;width:37px;height:1px;background:#333"></div>
<div class="ab" style="left:851px;top:244px;width:37px;height:1px;background:#5e5e5e"></div>
<div class="ab" style="left:851px;top:312px;width:37px;height:1px;background:#333"></div>
<div class="ab" style="left:851px;top:313px;width:37px;height:1px;background:#5e5e5e"></div>
<div class="ab" style="left:851px;top:381px;width:37px;height:1px;background:#333"></div>
<div class="ab" style="left:851px;top:382px;width:37px;height:1px;background:#5e5e5e"></div>
<div class="ab" style="left:851px;top:449px;width:37px;height:1px;background:#333"></div>
<div class="ab" style="left:851px;top:450px;width:37px;height:1px;background:#5e5e5e"></div>
<div class="ab" style="left:851px;top:518px;width:37px;height:1px;background:#333"></div>
<div class="ab" style="left:851px;top:519px;width:37px;height:1px;background:#5e5e5e"></div>
<div class="ab" style="left:860px;top:80px;width:1px;height:4px;background:#2e2e2e"></div>
<div class="ab" style="left:862px;top:80px;width:1px;height:4px;background:#2e2e2e"></div>
<div class="ab" style="left:864px;top:80px;width:1px;height:4px;background:#2e2e2e"></div>
<div class="ab" style="left:866px;top:80px;width:1px;height:4px;background:#2e2e2e"></div>
<div class="ab" style="left:868px;top:80px;width:1px;height:4px;background:#2e2e2e"></div>
<div class="ab" style="left:870px;top:80px;width:1px;height:4px;background:#2e2e2e"></div>
<div class="ab" style="left:872px;top:80px;width:1px;height:4px;background:#2e2e2e"></div>
<div class="ab" style="left:874px;top:80px;width:1px;height:4px;background:#2e2e2e"></div>
<div class="ab" style="left:876px;top:80px;width:1px;height:4px;background:#2e2e2e"></div>
<div class="ab" style="left:878px;top:80px;width:1px;height:4px;background:#2e2e2e"></div>
<div class="ab" style="left:860px;top:177px;width:1px;height:4px;background:#2e2e2e"></div>
<div class="ab" style="left:862px;top:177px;width:1px;height:4px;background:#2e2e2e"></div>
<div class="ab" style="left:864px;top:177px;width:1px;height:4px;background:#2e2e2e"></div>
<div class="ab" style="left:866px;top:177px;width:1px;height:4px;background:#2e2e2e"></div>
<div class="ab" style="left:868px;top:177px;width:1px;height:4px;background:#2e2e2e"></div>
<div class="ab" style="left:870px;top:177px;width:1px;height:4px;background:#2e2e2e"></div>
<div class="ab" style="left:872px;top:177px;width:1px;height:4px;background:#2e2e2e"></div>
<div class="ab" style="left:874px;top:177px;width:1px;height:4px;background:#2e2e2e"></div>
<div class="ab" style="left:876px;top:177px;width:1px;height:4px;background:#2e2e2e"></div>
<div class="ab" style="left:878px;top:177px;width:1px;height:4px;background:#2e2e2e"></div>
<div class="ab" style="left:860px;top:246px;width:1px;height:4px;background:#2e2e2e"></div>
<div class="ab" style="left:862px;top:246px;width:1px;height:4px;background:#2e2e2e"></div>
<div class="ab" style="left:864px;top:246px;width:1px;height:4px;background:#2e2e2e"></div>
<div class="ab" style="left:866px;top:246px;width:1px;height:4px;background:#2e2e2e"></div>
<div class="ab" style="left:868px;top:246px;width:1px;height:4px;background:#2e2e2e"></div>
<div class="ab" style="left:870px;top:246px;width:1px;height:4px;background:#2e2e2e"></div>
<div class="ab" style="left:872px;top:246px;width:1px;height:4px;background:#2e2e2e"></div>
<div class="ab" style="left:874px;top:246px;width:1px;height:4px;background:#2e2e2e"></div>
<div class="ab" style="left:876px;top:246px;width:1px;height:4px;background:#2e2e2e"></div>
<div class="ab" style="left:878px;top:246px;width:1px;height:4px;background:#2e2e2e"></div>
<div class="ab" style="left:860px;top:315px;width:1px;height:4px;background:#2e2e2e"></div>
<div class="ab" style="left:862px;top:315px;width:1px;height:4px;background:#2e2e2e"></div>
<div class="ab" style="left:864px;top:315px;width:1px;height:4px;background:#2e2e2e"></div>
<div class="ab" style="left:866px;top:315px;width:1px;height:4px;background:#2e2e2e"></div>
<div class="ab" style="left:868px;top:315px;width:1px;height:4px;background:#2e2e2e"></div>
<div class="ab" style="left:870px;top:315px;width:1px;height:4px;background:#2e2e2e"></div>
<div class="ab" style="left:872px;top:315px;width:1px;height:4px;background:#2e2e2e"></div>
<div class="ab" style="left:874px;top:315px;width:1px;height:4px;background:#2e2e2e"></div>
<div class="ab" style="left:876px;top:315px;width:1px;height:4px;background:#2e2e2e"></div>
<div class="ab" style="left:878px;top:315px;width:1px;height:4px;background:#2e2e2e"></div>
<div class="ab" style="left:860px;top:383px;width:1px;height:4px;background:#2e2e2e"></div>
<div class="ab" style="left:862px;top:383px;width:1px;height:4px;background:#2e2e2e"></div>
<div class="ab" style="left:864px;top:383px;width:1px;height:4px;background:#2e2e2e"></div>
<div class="ab" style="left:866px;top:383px;width:1px;height:4px;background:#2e2e2e"></div>
<div class="ab" style="left:868px;top:383px;width:1px;height:4px;background:#2e2e2e"></div>
<div class="ab" style="left:870px;top:383px;width:1px;height:4px;background:#2e2e2e"></div>
<div class="ab" style="left:872px;top:383px;width:1px;height:4px;background:#2e2e2e"></div>
<div class="ab" style="left:874px;top:383px;width:1px;height:4px;background:#2e2e2e"></div>
<div class="ab" style="left:876px;top:383px;width:1px;height:4px;background:#2e2e2e"></div>
<div class="ab" style="left:878px;top:383px;width:1px;height:4px;background:#2e2e2e"></div>
<div class="ab" style="left:860px;top:452px;width:1px;height:4px;background:#2e2e2e"></div>
<div class="ab" style="left:862px;top:452px;width:1px;height:4px;background:#2e2e2e"></div>
<div class="ab" style="left:864px;top:452px;width:1px;height:4px;background:#2e2e2e"></div>
<div class="ab" style="left:866px;top:452px;width:1px;height:4px;background:#2e2e2e"></div>
<div class="ab" style="left:868px;top:452px;width:1px;height:4px;background:#2e2e2e"></div>
<div class="ab" style="left:870px;top:452px;width:1px;height:4px;background:#2e2e2e"></div>
<div class="ab" style="left:872px;top:452px;width:1px;height:4px;background:#2e2e2e"></div>
<div class="ab" style="left:874px;top:452px;width:1px;height:4px;background:#2e2e2e"></div>
<div class="ab" style="left:876px;top:452px;width:1px;height:4px;background:#2e2e2e"></div>
<div class="ab" style="left:878px;top:452px;width:1px;height:4px;background:#2e2e2e"></div>
<div class="ab" style="left:860px;top:522px;width:1px;height:4px;background:#2e2e2e"></div>
<div class="ab" style="left:862px;top:522px;width:1px;height:4px;background:#2e2e2e"></div>
<div class="ab" style="left:864px;top:522px;width:1px;height:4px;background:#2e2e2e"></div>
<div class="ab" style="left:866px;top:522px;width:1px;height:4px;background:#2e2e2e"></div>
<div class="ab" style="left:868px;top:522px;width:1px;height:4px;background:#2e2e2e"></div>
<div class="ab" style="left:870px;top:522px;width:1px;height:4px;background:#2e2e2e"></div>
<div class="ab" style="left:872px;top:522px;width:1px;height:4px;background:#2e2e2e"></div>
<div class="ab" style="left:874px;top:522px;width:1px;height:4px;background:#2e2e2e"></div>
<div class="ab" style="left:876px;top:522px;width:1px;height:4px;background:#2e2e2e"></div>
<div class="ab" style="left:878px;top:522px;width:1px;height:4px;background:#2e2e2e"></div>
<svg class="ab" style="left:0;top:0" width="893" height="639"><g stroke="#d4d4d4" stroke-width="1.3"><circle cx="870.5" cy="100.5" r="5.5" fill="none" stroke-width="2"/><path d="M870.5 90V111M860 100.5H881M863 93L878 108M878 93L863 108"/></g><circle cx="870.5" cy="127.5" r="8" fill="#d4d4d4"/><rect x="869.3" y="126" width="2.6" height="6" fill="#535353"/><circle cx="870.6" cy="123.3" r="1.4" fill="#535353"/><path d="M861 162V155L863 152L864 155L866 151L868 154L870 150L872 153L874 150L876 154L878 152L880 155V162Z" fill="#d4d4d4"/><path d="M861 198C861 191 867 189 872 189C878 189 881 192 881 195C881 198 877 197 876 199C875 202 878 203 874 205C869 206 861 204 861 198Z" fill="#d4d4d4"/><circle cx="866" cy="196" r="1.4" fill="#535353"/><circle cx="870" cy="193" r="1.4" fill="#535353"/><circle cx="875" cy="193" r="1.4" fill="#535353"/><circle cx="868" cy="201" r="1.4" fill="#535353"/><rect x="862" y="218" width="17" height="16" fill="#d4d4d4"/><rect x="863.0" y="219" width="4.3" height="4" fill="#535353"/><rect x="863.0" y="224" width="4.3" height="4" fill="#888"/><rect x="863.0" y="229" width="4.3" height="4" fill="#535353"/><rect x="868.3" y="219" width="4.3" height="4" fill="#888"/><rect x="868.3" y="224" width="4.3" height="4" fill="#535353"/><rect x="868.3" y="229" width="4.3" height="4" fill="#888"/><rect x="873.6" y="219" width="4.3" height="4" fill="#535353"/><rect x="873.6" y="224" width="4.3" height="4" fill="#888"/><rect x="873.6" y="229" width="4.3" height="4" fill="#535353"/><circle cx="870.5" cy="265.5" r="8" fill="#d4d4d4"/><path d="M864.8 271.2L876.2 259.8A8 8 0 0 1 864.8 271.2Z" fill="#6a6a6a"/><rect x="865" y="284" width="13" height="13" fill="#d4d4d4"/><g fill="none" stroke-linecap="round" transform="translate(-1 1)"><path d="M864 305C867 304 867 300 868 296C869 292 870 290 873 290M865.5 295.5H870.5M870 297L876 304M876 297L870 304" stroke="#535353" stroke-width="3.2"/><path d="M864 305C867 304 867 300 868 296C869 292 870 290 873 290M865.5 295.5H870.5M870 297L876 304M876 297L870 304" stroke="#d4d4d4" stroke-width="1.3"/></g><path d="M865 335H876V344H865Z" fill="#d4d4d4"/><path d="M866 334L862 327M870.5 334V326M875 334L879 328" stroke="#d4d4d4" stroke-width="2"/><path d="M861 358H880M861 367H872" stroke="#d4d4d4" stroke-width="2"/><path d="M872 361C877 359 880 362 880 364C880 367 876 370 872 367Z" fill="#d4d4d4"/><path d="M866 356C869 355 871 358 868 360Z" fill="#d4d4d4"/><text x="861" y="411" font-family="Liberation Sans" font-size="16" fill="#d4d4d4">A</text><rect x="876.5" y="396" width="1.2" height="16" fill="#d4d4d4"/><path d="M870 424H876V439H874V426H872V439H870V433C866 433 864 431 864 428.5C864 426 866 424 870 424Z" fill="#d4d4d4"/><circle cx="870.5" cy="468" r="5" fill="#c8c8c8"/><circle cx="867" cy="474" r="5" fill="#e0e0e0" opacity="0.9"/><circle cx="874" cy="474" r="5" fill="#b0b0b0" opacity="0.9"/><path d="M864.5 504C864.5 497 867 494 870.5 494C874 494 876.5 497 876.5 504M863 494H878" fill="none" stroke="#d4d4d4" stroke-width="1.2"/><rect x="861" y="492" width="3" height="3" fill="#d4d4d4"/><rect x="877" y="492" width="3" height="3" fill="#d4d4d4"/><rect x="869" y="492.5" width="3" height="3" fill="#d4d4d4"/><rect x="862.5" y="504.5" width="4" height="4" fill="none" stroke="#d4d4d4"/><rect x="874.5" y="504.5" width="4" height="4" fill="none" stroke="#d4d4d4"/><path d="M863 536L868 533.5L873 536V542L868 544.5L863 542Z" fill="#d4d4d4"/><path d="M863 536L868 538.5L873 536M868 538.5V544.5" stroke="#535353" fill="none"/><rect x="875" y="534" width="4" height="4" fill="#d4d4d4"/><rect x="875" y="540" width="4" height="3" fill="#d4d4d4"/><rect x="862" y="546" width="17" height="3" fill="#d4d4d4"/><path d="M874 547H878L876 549Z" fill="#535353"/><path d="M864 563V577L877 570Z" fill="#d4d4d4"/><rect x="855.5" y="586.5" width="28" height="23" rx="2" fill="#3a3a3a" stroke="#333"/><path d="M870.5 590L878 594.5L870.5 599L863 594.5Z" fill="#d4d4d4"/><path d="M863 598L870.5 602.5L878 598" fill="none" stroke="#d4d4d4" stroke-width="2"/><rect x="862.5" y="616.5" width="4" height="4" fill="none" stroke="#d4d4d4"/><rect x="862.5" y="623.5" width="4" height="4" fill="none" stroke="#d4d4d4"/><rect x="862" y="630" width="5" height="5" fill="#d4d4d4"/><path d="M873 617C878 617 878 624 876 627L875 634" fill="none" stroke="#d4d4d4" stroke-width="1.5"/><path d="M870 620L873 615L875 621Z" fill="#d4d4d4"/></svg>
<div class="ab" style="left:297px;top:24px;width:249px;height:476px;background:#fff;border:1px solid #979797;border-top:none"></div>
<div class="ab" style="left:301px;top:47px;width:241px;height:1px;background:#a0a0a0"></div>
<div class="ab" style="left:301px;top:73px;width:241px;height:1px;background:#a0a0a0"></div>
<div class="ab" style="left:301px;top:184px;width:241px;height:1px;background:#a0a0a0"></div>
<div class="ab" style="left:301px;top:414px;width:241px;height:1px;background:#a0a0a0"></div>
<div class="ab" style="left:301px;top:474px;width:241px;height:1px;background:#a0a0a0"></div>
<div class="t" style="left:315px;top:30.5px;font-size:11.3px;color:#6d6d6d;letter-spacing:0px;-webkit-text-stroke:0.12px #6d6d6d">Last Filter</div>
<div class="t" style="left:377.25px;top:30.5px;width:150px;text-align:right;font-size:11.3px;letter-spacing:0.25px;-webkit-text-stroke:0.12px #6d6d6d;color:#6d6d6d">Ctrl+F</div>
<div class="t" style="left:315px;top:56.5px;font-size:11.3px;color:#000;letter-spacing:0px;-webkit-text-stroke:0.12px #000">Convert for Smart Filters</div>
<div class="t" style="left:315px;top:82.5px;font-size:11.3px;color:#000;letter-spacing:0px;-webkit-text-stroke:0.12px #000">Filter Gallery...</div>
<div class="t" style="left:315px;top:99.5px;font-size:11.3px;color:#000;letter-spacing:0px;-webkit-text-stroke:0.12px #000">Adaptive Wide Angle...</div>
<div class="t" style="left:377.25px;top:99.5px;width:150px;text-align:right;font-size:11.3px;letter-spacing:0.25px;-webkit-text-stroke:0.12px #000;color:#000">Shift+Ctrl+A</div>
<div class="t" style="left:315px;top:116.5px;font-size:11.3px;color:#000;letter-spacing:0px;-webkit-text-stroke:0.12px #000">Lens Correction...</div>
<div class="t" style="left:377.25px;top:116.5px;width:150px;text-align:right;font-size:11.3px;letter-spacing:0.25px;-webkit-text-stroke:0.12px #000;color:#000">Shift+Ctrl+R</div>
<div class="t" style="left:315px;top:133.5px;font-size:11.3px;color:#000;letter-spacing:0px;-webkit-text-stroke:0.12px #000">Liquify...</div>
<div class="t" style="left:377.25px;top:133.5px;width:150px;text-align:right;font-size:11.3px;letter-spacing:0.25px;-webkit-text-stroke:0.12px #000;color:#000">Shift+Ctrl+X</div>
<div class="t" style="left:315px;top:150.5px;font-size:11.3px;color:#000;letter-spacing:0px;-webkit-text-stroke:0.12px #000">Oil Paint...</div>
<div class="t" style="left:315px;top:167.5px;font-size:11.3px;color:#000;letter-spacing:0px;-webkit-text-stroke:0.12px #000">Vanishing Point...</div>
<div class="t" style="left:377.25px;top:167.5px;width:150px;text-align:right;font-size:11.3px;letter-spacing:0.25px;-webkit-text-stroke:0.12px #000;color:#000">Alt+Ctrl+V</div>
<div class="ab" style="left:298px;top:187px;width:243px;height:23px;background:#e8161e"></div>
<div class="ab" style="left:301px;top:190px;width:237px;height:17px;background:#2e6db4"></div>
<div class="t" style="left:315px;top:194.5px;font-size:11.3px;color:#fff;letter-spacing:0px;-webkit-text-stroke:0.12px #fff">Artistic</div>
<svg class="ab" style="left:533px;top:195px" width="6" height="9"><path d="M0 0.5V7.5L4 4Z" fill="#fff"/></svg>
<div class="t" style="left:315px;top:211.5px;font-size:11.3px;color:#000;letter-spacing:0px;-webkit-text-stroke:0.12px #000">Blur</div>
<svg class="ab" style="left:533px;top:212px" width="6" height="9"><path d="M0 0.5V7.5L4 4Z" fill="#000"/></svg>
<div class="t" style="left:315px;top:228.5px;font-size:11.3px;color:#000;letter-spacing:0px;-webkit-text-stroke:0.12px #000">Brush Strokes</div>
<svg class="ab" style="left:533px;top:229px" width="6" height="9"><path d="M0 0.5V7.5L4 4Z" fill="#000"/></svg>
<div class="t" style="left:315px;top:245.5px;font-size:11.3px;color:#000;letter-spacing:0px;-webkit-text-stroke:0.12px #000">Distort</div>
<svg class="ab" style="left:533px;top:246px" width="6" height="9"><path d="M0 0.5V7.5L4 4Z" fill="#000"/></svg>
<div class="t" style="left:315px;top:262.5px;font-size:11.3px;color:#000;letter-spacing:0px;-webkit-text-stroke:0.12px #000">Noise</div>
<svg class="ab" style="left:533px;top:263px" width="6" height="9"><path d="M0 0.5V7.5L4 4Z" fill="#000"/></svg>
<div class="t" style="left:315px;top:279.5px;font-size:11.3px;color:#000;letter-spacing:0px;-webkit-text-stroke:0.12px #000">Pixelate</div>
<svg class="ab" style="left:533px;top:280px" width="6" height="9"><path d="M0 0.5V7.5L4 4Z" fill="#000"/></svg>
<div class="t" style="left:315px;top:296.5px;font-size:11.3px;color:#000;letter-spacing:0px;-webkit-text-stroke:0.12px #000">Render</div>
<svg class="ab" style="left:533px;top:297px" width="6" height="9"><path d="M0 0.5V7.5L4 4Z" fill="#000"/></svg>
<div class="t" style="left:315px;top:313.5px;font-size:11.3px;color:#000;letter-spacing:0px;-webkit-text-stroke:0.12px #000">Sharpen</div>
<svg class="ab" style="left:533px;top:314px" width="6" height="9"><path d="M0 0.5V7.5L4 4Z" fill="#000"/></svg>
<div class="t" style="left:315px;top:330.5px;font-size:11.3px;color:#000;letter-spacing:0px;-webkit-text-stroke:0.12px #000">Sketch</div>
<svg class="ab" style="left:533px;top:331px" width="6" height="9"><path d="M0 0.5V7.5L4 4Z" fill="#000"/></svg>
<div class="t" style="left:315px;top:347.5px;font-size:11.3px;color:#000;letter-spacing:0px;-webkit-text-stroke:0.12px #000">Stylize</div>
<svg class="ab" style="left:533px;top:348px" width="6" height="9"><path d="M0 0.5V7.5L4 4Z" fill="#000"/></svg>
<div class="t" style="left:315px;top:364.5px;font-size:11.3px;color:#000;letter-spacing:0px;-webkit-text-stroke:0.12px #000">Texture</div>
<svg class="ab" style="left:533px;top:365px" width="6" height="9"><path d="M0 0.5V7.5L4 4Z" fill="#000"/></svg>
<div class="t" style="left:315px;top:381.5px;font-size:11.3px;color:#000;letter-spacing:0px;-webkit-text-stroke:0.12px #000">Video</div>
<svg class="ab" style="left:533px;top:382px" width="6" height="9"><path d="M0 0.5V7.5L4 4Z" fill="#000"/></svg>
<div class="t" style="left:315px;top:398.5px;font-size:11.3px;color:#000;letter-spacing:0px;-webkit-text-stroke:0.12px #000">Other</div>
<svg class="ab" style="left:533px;top:399px" width="6" height="9"><path d="M0 0.5V7.5L4 4Z" fill="#000"/></svg>
<div class="t" style="left:315px;top:424.5px;font-size:11.3px;color:#000;letter-spacing:0px;-webkit-text-stroke:0.12px #000">Digimarc</div>
<svg class="ab" style="left:533px;top:425px" width="6" height="9"><path d="M0 0.5V7.5L4 4Z" fill="#000"/></svg>
<div class="t" style="left:315px;top:441.5px;font-size:11.3px;color:#000;letter-spacing:0px;-webkit-text-stroke:0.12px #000">Imagenomic</div>
<svg class="ab" style="left:533px;top:442px" width="6" height="9"><path d="M0 0.5V7.5L4 4Z" fill="#000"/></svg>
<div class="t" style="left:315px;top:458.5px;font-size:11.3px;color:#000;letter-spacing:0px;-webkit-text-stroke:0.12px #000">Nik Collection</div>
<svg class="ab" style="left:533px;top:459px" width="6" height="9"><path d="M0 0.5V7.5L4 4Z" fill="#000"/></svg>
<div class="t" style="left:315px;top:483.5px;font-size:11.3px;color:#000;letter-spacing:0px;-webkit-text-stroke:0.12px #000">Browse Filters Online...</div>
<div class="t" style="left:469px;top:215px;font-size:22px;color:#e8161e;font-weight:bold">3</div>
<div class="ab" style="left:540px;top:187px;width:115px;height:261px;background:#fff;border:1px solid #979797"></div>
<div class="ab" style="left:541px;top:203px;width:114px;height:21px;background:#e8161e"></div>
<div class="ab" style="left:543px;top:207px;width:108px;height:14px;background:#2e6db4"></div>
<div class="t" style="left:558px;top:193.5px;font-size:11.3px;color:#000;letter-spacing:0px;-webkit-text-stroke:0.12px #000">Colored Pencil...</div>
<div class="t" style="left:558px;top:210.5px;font-size:11.3px;color:#fff;letter-spacing:0px;-webkit-text-stroke:0.12px #fff">Cutout...</div>
<div class="t" style="left:558px;top:227.5px;font-size:11.3px;color:#000;letter-spacing:0px;-webkit-text-stroke:0.12px #000">Dry Brush...</div>
<div class="t" style="left:558px;top:244.5px;font-size:11.3px;color:#000;letter-spacing:0px;-webkit-text-stroke:0.12px #000">Film Grain...</div>
<div class="t" style="left:558px;top:261.5px;font-size:11.3px;color:#000;letter-spacing:0px;-webkit-text-stroke:0.12px #000">Fresco...</div>
<div class="t" style="left:558px;top:278.5px;font-size:11.3px;color:#000;letter-spacing:0px;-webkit-text-stroke:0.12px #000">Neon Glow...</div>
<div class="t" style="left:558px;top:295.5px;font-size:11.3px;color:#000;letter-spacing:0px;-webkit-text-stroke:0.12px #000">Paint Daubs...</div>
<div class="t" style="left:558px;top:312.5px;font-size:11.3px;color:#000;letter-spacing:0px;-webkit-text-stroke:0.12px #000">Palette Knife...</div>
<div class="t" style="left:558px;top:329.5px;font-size:11.3px;color:#000;letter-spacing:0px;-webkit-text-stroke:0.12px #000">Plastic Wrap...</div>
<div class="t" style="left:558px;top:346.5px;font-size:11.3px;color:#000;letter-spacing:0px;-webkit-text-stroke:0.12px #000">Poster Edges...</div>
<div class="t" style="left:558px;top:363.5px;font-size:11.3px;color:#000;letter-spacing:0px;-webkit-text-stroke:0.12px #000">Rough Pastels...</div>
<div class="t" style="left:558px;top:380.5px;font-size:11.3px;color:#000;letter-spacing:0px;-webkit-text-stroke:0.12px #000">Smudge Stick...</div>
<div class="t" style="left:558px;top:397.5px;font-size:11.3px;color:#000;letter-spacing:0px;-webkit-text-stroke:0.12px #000">Sponge...</div>
<div class="t" style="left:558px;top:414.5px;font-size:11.3px;color:#000;letter-spacing:0px;-webkit-text-stroke:0.12px #000">Underpainting...</div>
<div class="t" style="left:558px;top:431.5px;font-size:11.3px;color:#000;letter-spacing:0px;-webkit-text-stroke:0.12px #000">Watercolor...</div>
</body></html>
